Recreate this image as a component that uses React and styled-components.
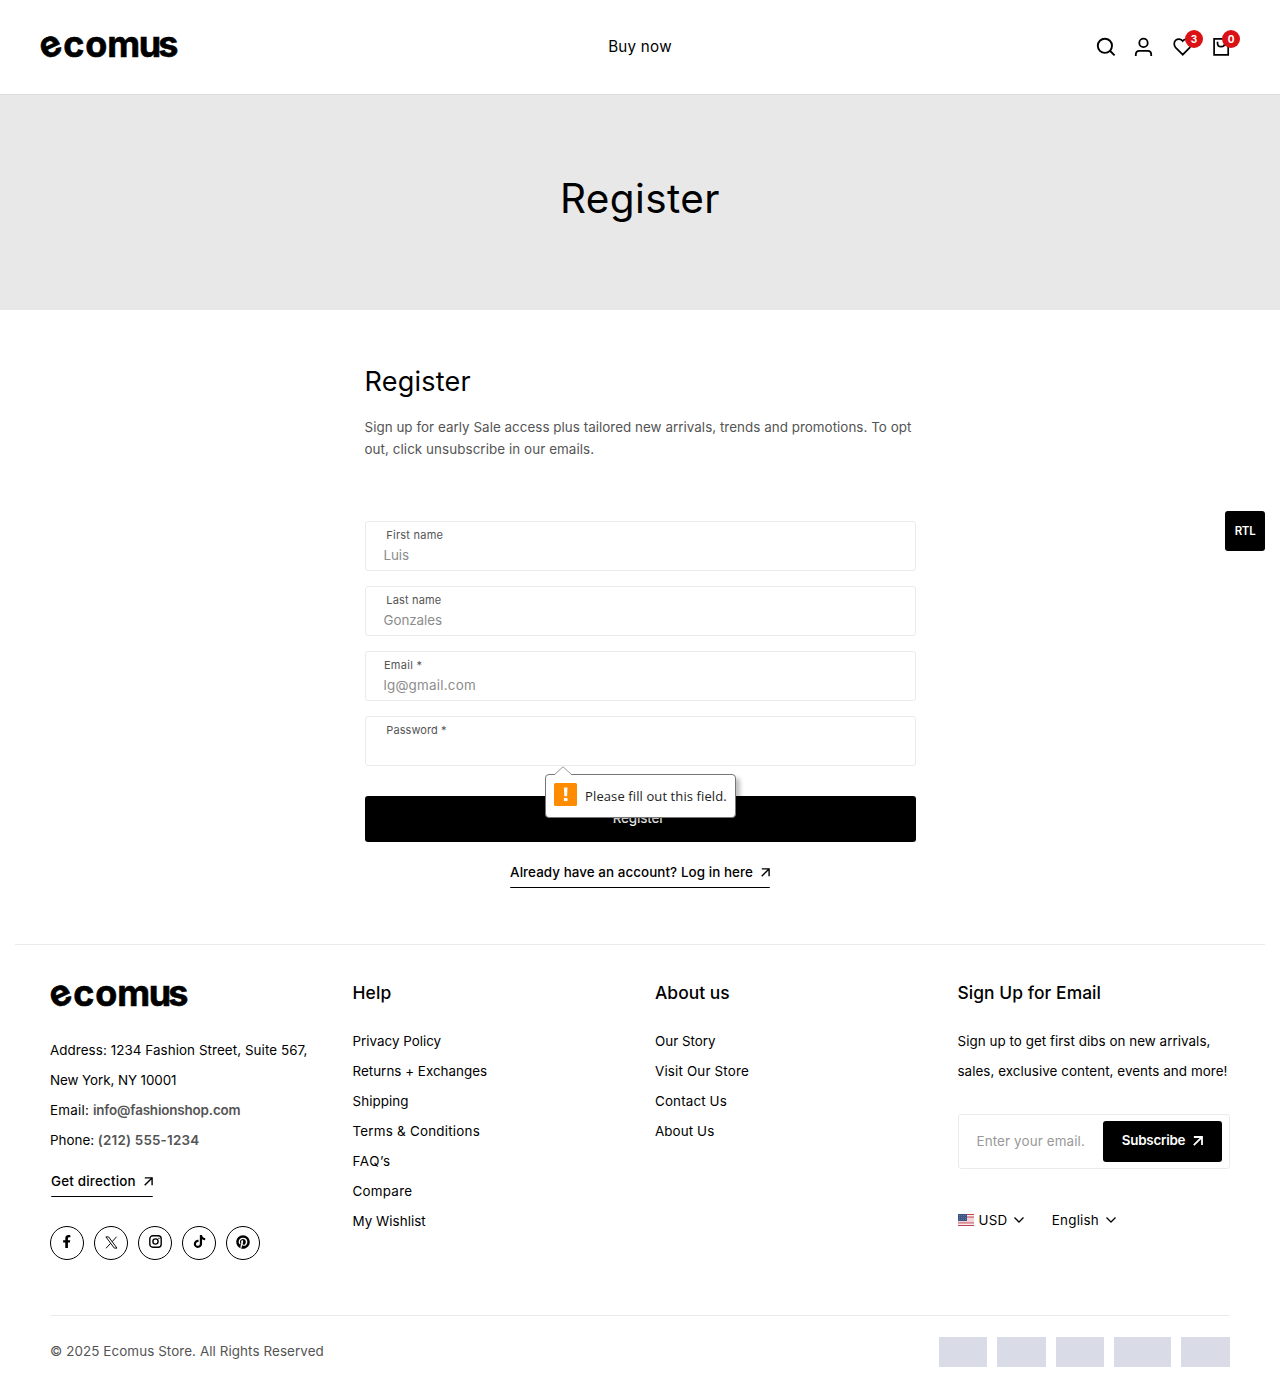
import React from 'react';
import styled, { createGlobalStyle } from 'styled-components';
import { FaFacebookF, FaTiktok, FaPinterest } from 'react-icons/fa';

const GlobalStyle = createGlobalStyle`
  * { box-sizing: border-box; }
  body { margin: 0; background: #fff; color: #000; font: 400 13.4px/22px Inter, sans-serif; }
  h1, h2, h3, p, ul { margin: 0; padding: 0; font-weight: 400; list-style: none; }
  a { color: inherit; text-decoration: none; }
  button, input { font: inherit; border: 0; padding: 0; margin: 0; }
  svg { display: block; flex: none; }
`;

const Track = styled.span`letter-spacing: ${p => p.$by || 0}px;`;

const Page = styled.div`height: 1387px; position: relative; overflow: hidden;`;

/* header */
const Header = styled.header`
  height: 95px;
  display: grid;
  grid-template-columns: 1fr auto 1fr;
  align-items: center;
  padding: 0 40px 1px;
  border-bottom: 1px solid #dcdcdc;
`;
const NavLink = styled.a`font-size: 15.2px; letter-spacing: 0.245px;`;
const Actions = styled.div`display: flex; justify-content: flex-end; gap: 18.3px; padding-right: 9px;`;
const Action = styled.a`position: relative; width: 20px; height: 20px;`;
const Badge = styled.span`
  position: absolute;
  top: -7px;
  left: ${p => p.$left}px;
  width: 18px;
  height: 18px;
  border-radius: 50%;
  background: #db1215;
  color: #fff;
  font-size: 10px;
  font-weight: 700;
  line-height: 18px;
  text-align: center;
`;
const Icon = styled.svg`
  fill: none;
  stroke: currentColor;
  stroke-width: ${p => p.$weight || 1.7};
`;
const LogoArt = styled.svg`
  overflow: visible;
  text { font: 700 36px Inter, sans-serif; stroke: #000; stroke-width: 0.6px; }
`;

/* title banner */
const Banner = styled.section`
  height: 215px;
  background: #e8e8e8;
  display: flex;
  align-items: center;
  justify-content: center;
  padding-bottom: 8px;
`;
const BannerTitle = styled.h1`font-size: 40.5px; line-height: 50px; letter-spacing: 0.4px;`;

/* form */
const FormSection = styled.section`width: 551px; margin: 0 auto; padding-top: 55px; height: 634px;`;
const FormTitle = styled.h2`font-size: 27px; line-height: 34px; letter-spacing: 0.23px;`;
const Intro = styled.p`margin-top: 17px; color: #545454; white-space: nowrap;`;
const Fields = styled.div`margin-top: 61px; display: grid; gap: 15px;`;
const Field = styled.label`
  height: 50px;
  border: 1px solid #ebebeb;
  border-radius: 3px;
  padding: 4px 18px 0;
  display: block;
`;
const FieldLabel = styled.span`
  display: block;
  font-size: 11px;
  line-height: 18px;
  color: #545454;
  padding-left: ${p => p.$indent}px;
  letter-spacing: ${p => p.$track}px;
`;
const FieldInput = styled.input`
  display: block;
  width: 100%;
  height: 22px;
  outline: 0;
  background: none;
  letter-spacing: ${p => p.$track}px;
  &::placeholder { color: #8c8c8c; opacity: 1; }
`;
const SubmitWrap = styled.div`position: relative; margin-top: 30px;`;
const Submit = styled.button`
  width: 100%;
  height: 46px;
  border-radius: 3px;
  background: #000;
  color: #fff;
  font-weight: 500;
  letter-spacing: -0.15px;
  padding: 0 3px 3px 0;
`;
const Tooltip = styled.div`
  position: absolute;
  left: 180px;
  top: -22px;
  width: 191px;
  height: 44px;
  background: #fff;
  border: 1px solid #767676;
  border-radius: 4px;
  box-shadow: 4px 4px 4px rgba(0, 0, 0, 0.25);
  display: flex;
  padding: 8px 0 0 8px;
  font: 400 13px/24px "Open Sans", sans-serif;
  letter-spacing: 0.1px;
  color: #222;
  white-space: nowrap;
`;
const TooltipTip = styled.svg`position: absolute; left: 8px; top: -9px;`;
const TooltipText = styled.span`margin: 1px 0 0 8.6px;`;
const Centered = styled.div`display: flex; justify-content: center; margin-top: 19px;`;
const LineLink = styled.a`
  display: inline-flex;
  align-items: center;
  gap: 8px;
  height: 27px;
  padding-bottom: 4px;
  border-bottom: 1px solid #000;
  border-radius: 1px;
  font-weight: 480;
  letter-spacing: ${p => p.$track}px;
  white-space: nowrap;
`;

/* footer */
const Footer = styled.footer`margin: 0 15px; border-top: 1px solid #ebebeb; padding: 0 35px;`;
const Columns = styled.div`
  display: grid;
  grid-template-columns: repeat(4, 272.5px);
  gap: 30px;
  height: 370px;
  padding-top: 37px;
`;
const Column = styled.div`white-space: nowrap; min-width: 0;`;
const LogoSlot = styled.div`padding-top: 3px;`;
const Lines = styled.ul`margin-top: ${p => p.$top}px; line-height: 30px;`;
const Strong = styled.b`font-weight: 600; color: #545454; letter-spacing: ${p => p.$track}px;`;
const Heading = styled.h3`font-size: 17.4px; line-height: 22px; font-weight: 480; letter-spacing: ${p => p.$track || 0.03}px;`;
const Direction = styled.div`margin: 15px 0 0 1px; height: 27px;`;
const Socials = styled.div`display: flex; gap: 10px; margin-top: 29px;`;
const Social = styled.a`
  width: 34px;
  height: 34px;
  border: 1px solid #000;
  border-radius: 50%;
  display: flex;
  align-items: center;
  justify-content: center;
  padding-bottom: ${p => p.$lift ?? 3}px;
`;
const Newsletter = styled.form`
  display: flex;
  align-items: center;
  height: 55px;
  margin-top: 28px;
  border: 1px solid #ebebeb;
  border-radius: 3px;
  padding: 0 7px 0 18px;
`;
const EmailInput = styled.input`
  flex: 1;
  min-width: 0;
  outline: 0;
  background: none;
  letter-spacing: 0.13px;
  padding-bottom: 2px;
  &::placeholder { color: #999; opacity: 1; }
`;
const Subscribe = styled.button`
  width: 119px;
  height: 41px;
  margin-left: 17px;
  border-radius: 3px;
  background: #000;
  color: #fff;
  font-weight: 600;
  letter-spacing: -0.23px;
  display: flex;
  align-items: center;
  justify-content: center;
  gap: 8px;
  padding-bottom: 3px;
`;
const ButtonArrow = styled.span`padding-top: 2px;`;
const Pickers = styled.div`display: flex; gap: 27.5px; margin-top: 40px;`;
const Picker = styled.div`
  display: flex;
  align-items: center;
  svg:last-child { margin-bottom: 1px; }
`;
const PickerText = styled.span`margin: 0 7px 0 ${p => p.$left || 0}px; letter-spacing: 0.21px;`;
const Bottom = styled.div`
  display: flex;
  align-items: center;
  justify-content: space-between;
  border-top: 1px solid #ebebeb;
  height: 72px;
  color: #545454;
`;
const Copyright = styled.p`letter-spacing: 0.09px; padding-bottom: 1px;`;
const Payments = styled.div`display: flex; gap: 10px; padding-top: 1px;`;
const Payment = styled.span`width: ${p => p.$w}px; height: 30px; background: #d9dbe6;`;

const DirButton = styled.button`
  position: absolute;
  right: 15px;
  top: 511px;
  width: 40px;
  height: 40px;
  border-radius: 3px;
  background: #000;
  color: #fff;
  font-size: 11.5px;
  font-weight: 600;
  letter-spacing: -0.3px;
`;

const Logo = () => (
  <LogoArt width="136" height="22" viewBox="0 0 136 22">
    <text x="4.9 23.2 45.3 67.3 98.8 118.2" y="24.2 21 21 21 21 21" rotate="-25 0 0 0 0 0">ecomus</text>
  </LogoArt>
);

const ArrowUpRight = ({ size = 9, weight = 1.4 }) => (
  <Icon width={size} height={size} viewBox="0 0 9 9" $weight={weight}>
    <path d="M.8 .9H8.1V8.2M8 1L.7 8.3" />
  </Icon>
);

const Chevron = () => (
  <Icon width="10" height="6" viewBox="0 0 10 6" $weight={1.3}>
    <path d="M.5 .5L5 5L9.5 .5" />
  </Icon>
);

const Flag = () => (
  <svg width="16" height="12" viewBox="0 0 16 12">
    <rect width="16" height="12" fill="#f3d3d6" />
    <path d="M0 .5H16M0 3H16M0 9H16M0 11.5H16" stroke="#c0414f" strokeWidth="1" />
    <path d="M0 10.2H16M9 1.7H16" stroke="#fff" strokeWidth=".8" />
    <rect width="9" height="7" fill="#3d5487" />
    <path d="M1 1.5H9M1 3.5H9M1 5.5H9" stroke="#7385ad" strokeWidth=".6" strokeDasharray="1 1" />
  </svg>
);

const FIELDS = [
  { label: 'First name', indent: 2.8, track: 0.24, hint: 'Luis', hintTrack: -0.07 },
  { label: 'Last name', indent: 2.8, track: 0.16, hint: 'Gonzales', hintTrack: -0.07 },
  { label: 'Email *', indent: 0.4, track: 0.3, hint: 'lg@gmail.com', hintTrack: 0.24 },
  { label: 'Password *', indent: 2.8, track: 0.08, hint: '', hintTrack: 0 },
];
const HELP = [
  ['Privacy Policy', 0], ['Returns + Exchanges', 0.02], ['Shipping', 0.08], ['Terms & Conditions', 0.23],
  ['FAQ’s', 0.58], ['Compare', 0.25], ['My Wishlist', 0.04],
];
const ABOUT = [['Our Story', 0], ['Visit Our Store', 0.17], ['Contact Us', 0.14], ['About Us', 0.09]];

const LinkList = ({ items }) => (
  <Lines $top={22}>
    {items.map(([text, by]) => <li key={text}><Track as="a" $by={by}>{text}</Track></li>)}
  </Lines>
);

export default function App() {
  return (
    <Page>
      <GlobalStyle />
      <Header>
        <Logo />
        <NavLink>Buy now</NavLink>
        <Actions>
          <Action>
            <Icon width="20" height="20" $weight={1.9}>
              <circle cx="8.9" cy="8.8" r="7.1" />
              <path d="M13.9 13.8L18.6 18.4" />
            </Icon>
          </Action>
          <Action>
            <Icon width="20" height="20" $weight={1.8}>
              <circle cx="9.5" cy="5.9" r="4.2" />
              <path d="M1.8 19V17.6C1.8 15.3 3 13.9 5.2 13.9H13.8C16 13.9 17.2 15.3 17.2 17.6V19" />
            </Icon>
          </Action>
          <Action>
            <Icon width="20" height="20">
              <path d="M9.7 17.7L2.7 10.6C.6 8.3 .8 5 2.8 3.2C4.9 1.4 7.9 1.7 9.7 4.1C11.5 1.7 14.5 1.4 16.6 3.2C18.6 5 18.8 8.3 16.7 10.6Z" />
            </Icon>
            <Badge $left={12.3}>3</Badge>
          </Action>
          <Action>
            <Icon width="20" height="20">
              <path d="M3.1 1.9H17.2V17.9H3.1ZM6.5 4.8V6C6.5 8.2 8 9.7 10.1 9.7C12.2 9.7 13.7 8.2 13.7 6V4.8" />
            </Icon>
            <Badge $left={11}>0</Badge>
          </Action>
        </Actions>
      </Header>

      <Banner><BannerTitle>Register</BannerTitle></Banner>

      <FormSection>
        <FormTitle>Register</FormTitle>
        <Intro>
          <Track $by={0.035}>Sign up for early Sale access plus tailored new arrivals, trends and promotions. To opt</Track><br />
          <Track $by={0.07}>out, click unsubscribe in our emails.</Track>
        </Intro>
        <Fields>
          {FIELDS.map(f => (
            <Field key={f.label}>
              <FieldLabel $indent={f.indent} $track={f.track}>{f.label}</FieldLabel>
              <FieldInput placeholder={f.hint} $track={f.hintTrack} />
            </Field>
          ))}
        </Fields>
        <SubmitWrap>
          <Submit>Register</Submit>
          <Tooltip>
            <TooltipTip width="18" height="10" viewBox="0 0 18 10">
              <path d="M1 10V8.5L9 .8L17 8.5V10Z" fill="#fff" />
              <path d="M.5 8.5L9 .8L17.5 8.5" fill="none" stroke="#999" />
            </TooltipTip>
            <svg width="23" height="23" viewBox="0 0 23 23">
              <rect width="23" height="23" rx="1.5" fill="#ff8c00" />
              <path d="M9.9 4.5H13.5L13.1 13.2H10.3ZM9.9 15H13.5V18H9.9Z" fill="#fff" />
            </svg>
            <TooltipText>Please fill out this field.</TooltipText>
          </Tooltip>
        </SubmitWrap>
        <Centered>
          <LineLink $track={0.07}>Already have an account? Log in here <ArrowUpRight /></LineLink>
        </Centered>
      </FormSection>

      <Footer>
        <Columns>
          <Column>
            <LogoSlot><Logo /></LogoSlot>
            <Lines $top={28}>
              <li><Track $by={0.072}>Address: 1234 Fashion Street, Suite 567,</Track></li>
              <li><Track $by={-0.08}>New York, NY 10001</Track></li>
              <li><Track $by={0.22}>Email: </Track><Strong $track={-0.15}>info@fashionshop.com</Strong></li>
              <li>Phone: <Strong $track={0.2}>(212) 555-1234</Strong></li>
            </Lines>
            <Direction><LineLink $track={0.2}>Get direction <ArrowUpRight /></LineLink></Direction>
            <Socials>
              <Social><FaFacebookF size={13.5} /></Social>
              <Social $lift={1}>
                <Icon width="13" height="13" viewBox="0 0 13 13" $weight={0.95}>
                  <path d="M.9 .9H3.6L12 12.1H9.3ZM11.6 .7L7.2 5.7M5.6 7.3L1 12.3" />
                </Icon>
              </Social>
              <Social>
                <Icon width="13" height="13" viewBox="0 0 13 13" $weight={1.4}>
                  <rect x=".8" y=".8" width="11.4" height="11.4" rx="3" />
                  <circle cx="6.5" cy="6.5" r="2.6" />
                  <path d="M9.4 3.4H10.5" />
                </Icon>
              </Social>
              <Social><FaTiktok size={13} /></Social>
              <Social $lift={2}><FaPinterest size={14} /></Social>
            </Socials>
          </Column>
          <Column>
            <Heading $track={0.15}>Help</Heading>
            <LinkList items={HELP} />
          </Column>
          <Column>
            <Heading>About us</Heading>
            <LinkList items={ABOUT} />
          </Column>
          <Column>
            <Heading $track={0.07}>Sign Up for Email</Heading>
            <Lines $top={22}>
              <li><Track $by={0.044}>Sign up to get first dibs on new arrivals,</Track></li>
              <li><Track $by={0.055}>sales, exclusive content, events and more!</Track></li>
            </Lines>
            <Newsletter>
              <EmailInput placeholder="Enter your email..." />
              <Subscribe type="button">
                Subscribe
                <ButtonArrow><ArrowUpRight size={10} weight={1.6} /></ButtonArrow>
              </Subscribe>
            </Newsletter>
            <Pickers>
              <Picker><Flag /><PickerText $left={5}>USD</PickerText><Chevron /></Picker>
              <Picker><PickerText>English</PickerText><Chevron /></Picker>
            </Pickers>
          </Column>
        </Columns>
        <Bottom>
          <Copyright>© 2025 Ecomus Store. All Rights Reserved</Copyright>
          <Payments>
            {[48, 49, 48, 57, 49].map((w, i) => <Payment key={i} $w={w} />)}
          </Payments>
        </Bottom>
      </Footer>

      <DirButton>RTL</DirButton>
    </Page>
  );
}
